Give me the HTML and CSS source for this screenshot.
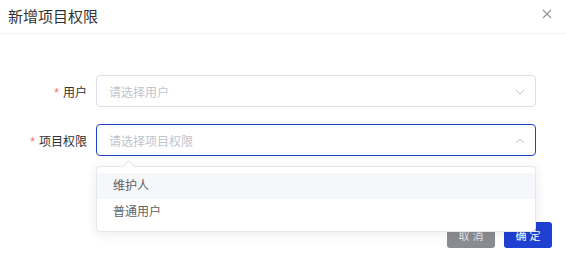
FILE: index.html
```html
<!DOCTYPE html>
<html lang="zh-CN">
<head>
    <meta charset="UTF-8">
    <meta name="viewport" content="width=device-width, initial-scale=1.0">
    <title>新增项目权限</title>
    <link rel="stylesheet" href="styles.css">
</head>
<body>
    <div class="dialog">
        <div class="dialog-header">
            <span class="dialog-title">新增项目权限</span>
            <button class="dialog-close" aria-label="关闭">
                <svg width="10" height="10" viewBox="0 0 10 10">
                    <path d="M1 1L9 9M9 1L1 9" stroke="#909399" stroke-width="1.1" fill="none"/>
                </svg>
            </button>
        </div>
        <div class="dialog-body">
            <div class="form-item">
                <label class="form-label"><span class="required">*</span>用户</label>
                <div class="select">
                    <span class="placeholder">请选择用户</span>
                    <svg class="select-arrow" width="10" height="6" viewBox="0 0 10 6">
                        <path d="M1 1L5 5L9 1" stroke="#c0c4cc" stroke-width="1" fill="none"/>
                    </svg>
                </div>
            </div>
            <div class="form-item">
                <label class="form-label"><span class="required">*</span>项目权限</label>
                <div class="select is-focus">
                    <span class="placeholder">请选择项目权限</span>
                    <svg class="select-arrow" width="10" height="6" viewBox="0 0 10 6">
                        <path d="M1 5L5 1L9 5" stroke="#c0c4cc" stroke-width="1" fill="none"/>
                    </svg>
                    <div class="dropdown">
                        <div class="dropdown-arrow"></div>
                        <ul class="dropdown-list">
                            <li class="dropdown-item hover">维护人</li>
                            <li class="dropdown-item">普通用户</li>
                        </ul>
                    </div>
                </div>
            </div>
        </div>
        <div class="dialog-footer">
            <button class="btn btn-cancel">取 消</button>
            <button class="btn btn-primary">确 定</button>
        </div>
    </div>
</body>
</html>
```

FILE: styles.css
```css
body {
    margin: 0;
    background: #fff;
    font-family: "Liberation Sans", "Noto Sans CJK SC", sans-serif;
}
.dialog {
    width: 566px;
    height: 261px;
    background: #fff;
}
.dialog-header {
    display: flex;
    justify-content: space-between;
    align-items: center;
    height: 33px;
    padding: 0 14px 0 8px;
    border-bottom: 1px solid #f2f2f2;
}
.dialog-title {
    font-size: 15px;
    color: #333;
    line-height: 33px;
}
.dialog-close {
    display: flex;
    padding: 0;
    margin-top: -5px;
    border: none;
    background: none;
    cursor: pointer;
}
.dialog-body {
    padding: 41px 30px 0 0;
}
.form-item {
    display: flex;
    align-items: center;
    margin-bottom: 17px;
}
.form-label {
    width: 87px;
    padding-right: 9px;
    text-align: right;
    font-size: 12px;
    color: #303133;
}
.required {
    color: #f56c6c;
    margin-right: 4px;
}
.select {
    position: relative;
    display: flex;
    align-items: center;
    justify-content: space-between;
    width: 440px;
    height: 32px;
    padding: 0 10px 0 12px;
    border: 1px solid #dcdfe6;
    border-radius: 4px;
    box-sizing: border-box;
    font-size: 12px;
}
.select.is-focus {
    border-color: #2042d3;
}
.placeholder {
    color: #c0c4cc;
}
.select-arrow {
    margin-top: 1px;
}
.dropdown {
    position: absolute;
    top: 41px;
    left: -1px;
    right: -1px;
    z-index: 10;
    background: #fff;
    border: 1px solid #e4e7ed;
    border-radius: 4px;
    box-shadow: 0 2px 12px rgba(0, 0, 0, 0.08);
}
.dropdown-arrow {
    position: absolute;
    top: -5px;
    left: 27px;
    width: 8px;
    height: 8px;
    background: #fff;
    border-top: 1px solid #e4e7ed;
    border-left: 1px solid #e4e7ed;
    transform: rotate(45deg);
}
.dropdown-list {
    list-style: none;
    margin: 0;
    padding: 6px 0;
}
.dropdown-item {
    height: 26px;
    line-height: 26px;
    padding: 0 16px;
    font-size: 12px;
    color: #606266;
}
.dropdown-item.hover {
    background: #f5f7fa;
}
.dialog-footer {
    display: flex;
    justify-content: flex-end;
    gap: 9px;
    padding: 49px 14px 0 0;
}
.btn {
    width: 48px;
    height: 26px;
    padding: 0;
    border: none;
    border-radius: 3px;
    font-size: 11px;
    color: #fff;
    font-family: "Liberation Sans", "Noto Sans CJK SC", sans-serif;
    cursor: pointer;
}
.btn-cancel {
    background: #8a8c91;
    color: #e4e5e7;
}
.btn-primary {
    background: #1f40d1;
}
```
